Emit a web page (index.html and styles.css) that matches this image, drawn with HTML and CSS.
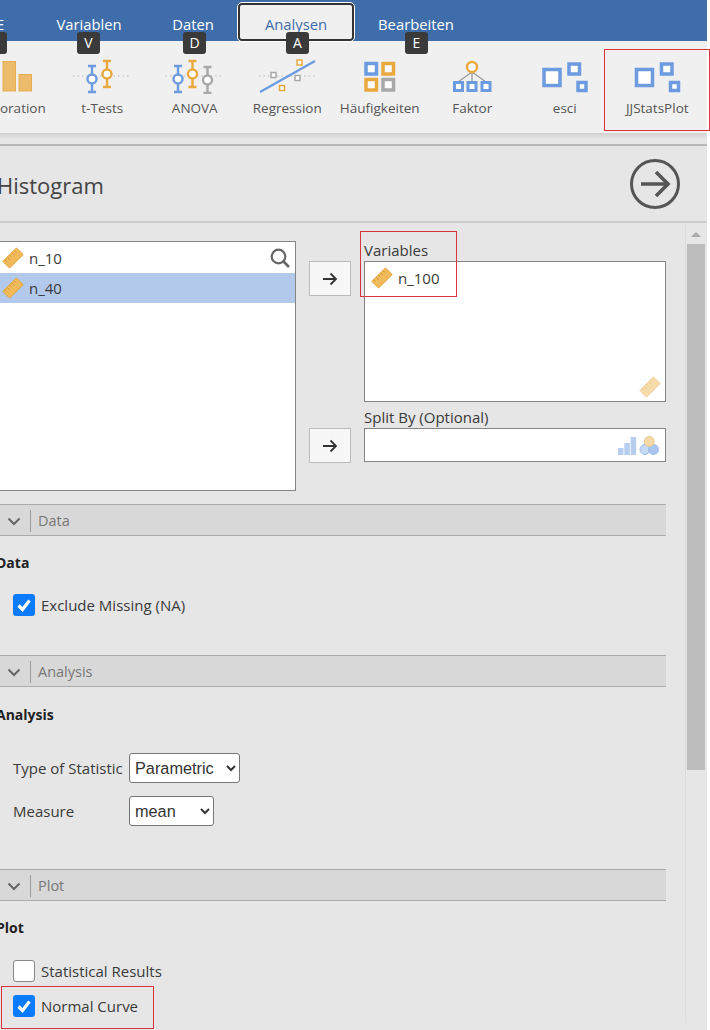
FILE: index.html
```html
<!DOCTYPE html>
<html lang="en">
<head>
  <meta charset="UTF-8">
  <title>Histogram</title>
  <link rel="stylesheet" href="styles.css">
</head>
<body>
  <svg class="defs" width="0" height="0">
    <symbol id="ruler" viewBox="0 0 24 24">
      <g transform="rotate(-45 12 12)">
        <rect x="1.500" y="6.800" width="21" height="10.400" rx="0.500" fill="#f0b95a" stroke="#e2a33c"/>
        <path d="M4.500 7.300v2.500M8 7.300v3.500M11.500 7.300v2.500M15 7.300v3.500M18.500 7.300v2.500" stroke="#c98d2c" fill="none" stroke-width="0.800"/>
      </g>
    </symbol>
    <symbol id="arrow" viewBox="0 0 16 14">
      <path d="M1 7h13M8.500 1.500L14 7l-5.500 5.500" fill="none" stroke="#333" stroke-width="1.800"/>
    </symbol>
    <symbol id="chevron" viewBox="0 0 14 9">
      <path d="M1.500 1.500L7 7l5.500-5.500" fill="none" stroke="#666" stroke-width="2"/>
    </symbol>
    <symbol id="check" viewBox="0 0 22 22">
      <rect width="22" height="22" rx="3" fill="#0d7bfd"/>
      <path d="M5.500 11.500l4 4 7-9" fill="none" stroke="#fff" stroke-width="3.200"/>
    </symbol>
  </svg>

  <div class="app">
    <nav class="tabs">
      <a class="tab tab-file">E<span class="keytip"></span></a>
      <a class="tab tab-vars">Variablen<span class="keytip">V</span></a>
      <a class="tab tab-data">Daten<span class="keytip">D</span></a>
      <a class="tab tab-active">Analysen<span class="keytip">A</span></a>
      <a class="tab tab-edit">Bearbeiten<span class="keytip">E</span></a>
    </nav>

    <div class="ribbon">
      <div class="ribbon-item">
        <svg class="ribbon-icon" viewBox="-36.500 58 92.500 36">
          <rect x="2.500" y="61.500" width="12.500" height="29.500" class="bar"/>
          <rect x="18.500" y="74.500" width="12.500" height="16.500" class="bar"/>
        </svg>
        <span>Exploration</span>
      </div>
      <div class="ribbon-item">
        <svg class="ribbon-icon" viewBox="56 58 92.500 36">
          <path d="M73 76h57" class="dots"/>
          <path d="M92 66v26M88 66h8M88 92h8" class="st-blue"/>
          <circle cx="92" cy="79" r="4.500" class="st-blue"/>
          <path d="M107 61v26M103 61h8M103 87h8" class="st-orange"/>
          <circle cx="107" cy="74" r="4.500" class="st-orange"/>
        </svg>
        <span>t-Tests</span>
      </div>
      <div class="ribbon-item">
        <svg class="ribbon-icon" viewBox="148.500 58 92.500 36">
          <path d="M165 76h57" class="dots"/>
          <path d="M177.500 66v26M173.500 66h8M173.500 92h8" class="st-blue"/>
          <circle cx="177.500" cy="79" r="4.500" class="st-blue"/>
          <path d="M192 61v26M188 61h8M188 87h8" class="st-orange"/>
          <circle cx="192" cy="74" r="4.500" class="st-orange"/>
          <path d="M207 67v26M203 67h8M203 93h8" class="st-gray"/>
          <circle cx="207" cy="80" r="4.500" class="st-gray"/>
        </svg>
        <span>ANOVA</span>
      </div>
      <div class="ribbon-item">
        <svg class="ribbon-icon" viewBox="241 58 92.500 36">
          <path d="M259 76h58" class="dots"/>
          <path d="M260 92l55-31" class="st-blue"/>
          <rect x="271" y="72.500" width="5" height="5" class="st-gray thin"/>
          <rect x="297" y="60" width="5" height="5" class="st-orange thin"/>
          <rect x="295" y="75.500" width="5" height="5" class="st-gray thin"/>
          <rect x="279.500" y="85.500" width="5" height="5" class="st-orange thin"/>
        </svg>
        <span>Regression</span>
      </div>
      <div class="ribbon-item">
        <svg class="ribbon-icon" viewBox="333.500 58 92.500 36">
          <rect x="365.500" y="63.500" width="10.500" height="10.500" class="st-blue thick"/>
          <rect x="382.500" y="63.500" width="10.500" height="10.500" class="st-orange thick"/>
          <rect x="365.500" y="79.500" width="10.500" height="10.500" class="st-orange thick"/>
          <rect x="382.500" y="79.500" width="10.500" height="10.500" class="st-gray thick"/>
        </svg>
        <span>Häufigkeiten</span>
      </div>
      <div class="ribbon-item">
        <svg class="ribbon-icon" viewBox="426 58 92.500 36">
          <path d="M472 72L458 82M472 72v10M472 72l14 10" class="link"/>
          <circle cx="472" cy="67" r="5" class="st-orange"/>
          <rect x="454.500" y="82.500" width="8" height="8" class="st-blue mid"/>
          <rect x="468" y="82.500" width="8" height="8" class="st-blue mid"/>
          <rect x="482" y="82.500" width="8" height="8" class="st-blue mid"/>
        </svg>
        <span>Faktor</span>
      </div>
      <div class="ribbon-item">
        <svg class="ribbon-icon" viewBox="518.500 58 92.500 36">
          <rect x="543.500" y="69.500" width="16" height="16" class="st-blue thick"/>
          <rect x="568.500" y="64" width="10.500" height="10" class="st-blue thick"/>
          <rect x="577.500" y="82.500" width="8" height="8" class="st-blue thick"/>
        </svg>
        <span>esci</span>
      </div>
      <div class="ribbon-item">
        <svg class="ribbon-icon" viewBox="611 58 92.500 36">
          <rect x="636.500" y="69.500" width="16" height="16" class="st-blue thick"/>
          <rect x="661.500" y="64" width="10.500" height="10" class="st-blue thick"/>
          <rect x="670.500" y="82.500" width="8" height="8" class="st-blue thick"/>
        </svg>
        <span>JJStatsPlot</span>
      </div>
    </div>

    <header class="title-row">
      <h1>Histogram</h1>
      <svg class="run-icon" viewBox="0 0 52 52">
        <circle cx="26" cy="26" r="23.500" fill="none" stroke="#555" stroke-width="3"/>
        <path d="M12 26h27M27 14l12 12-12 12" fill="none" stroke="#555" stroke-width="3.600"/>
      </svg>
    </header>

    <div class="panel">
      <main class="options">
        <div class="vars">
          <div class="source-list">
            <div class="var-row">
              <svg class="ruler"><use href="#ruler"/></svg>n_10
              <svg class="search" viewBox="0 0 20 20">
                <circle cx="8.500" cy="8.500" r="6.800" fill="none" stroke="#666" stroke-width="2.200"/>
                <path d="M13.500 13.500L19 19" stroke="#666" stroke-width="2.600"/>
              </svg>
            </div>
            <div class="var-row selected">
              <svg class="ruler"><use href="#ruler"/></svg>n_40
            </div>
          </div>

          <div class="targets">
            <div class="target target-vars">
              <button class="move"><svg><use href="#arrow"/></svg></button>
              <div class="field">
                <label>Variables</label>
                <div class="drop drop-vars">
                  <div class="var-row">
                    <svg class="ruler"><use href="#ruler"/></svg>n_100
                  </div>
                  <svg class="ruler hint"><use href="#ruler"/></svg>
                </div>
              </div>
            </div>
            <div class="target">
              <button class="move"><svg><use href="#arrow"/></svg></button>
              <div class="field">
                <label>Split By (Optional)</label>
                <div class="drop drop-split">
                  <svg class="hint-split" viewBox="0 0 42 19">
                    <path d="M0 12h5.500v7H0zM6.300 7h5.500v12H6.300zM12.600 1h5.500v18h-5.500z" fill="#b6cdf0"/>
                    <circle cx="27" cy="13.500" r="5" fill="#c5d8f4" stroke="#9dbbe8"/>
                    <circle cx="35.500" cy="13.500" r="5" fill="#a9c5ee" stroke="#9dbbe8"/>
                    <circle cx="31.200" cy="5.500" r="5" fill="#f5d9a6" stroke="#e9c98f"/>
                  </svg>
                </div>
              </div>
            </div>
          </div>
        </div>

        <section class="group group-data">
          <div class="group-head"><svg class="chevron"><use href="#chevron"/></svg><span>Data</span></div>
          <h2>Data</h2>
          <div class="check-row check-first"><svg class="box"><use href="#check"/></svg>Exclude Missing (NA)</div>
        </section>

        <section class="group group-analysis">
          <div class="group-head"><svg class="chevron"><use href="#chevron"/></svg><span>Analysis</span></div>
          <h2>Analysis</h2>
          <div class="select-grid">
            <label>Type of Statistic</label>
            <select class="sel-type"><option>Parametric</option></select>
            <label>Measure</label>
            <select class="sel-measure"><option>mean</option></select>
          </div>
        </section>

        <section class="group group-plot">
          <div class="group-head"><svg class="chevron"><use href="#chevron"/></svg><span>Plot</span></div>
          <h2>Plot</h2>
          <div class="check-row check-first"><span class="box box-off"></span>Statistical Results</div>
          <div class="check-row"><svg class="box"><use href="#check"/></svg>Normal Curve</div>
        </section>
      </main>

      <div class="scrollbar">
        <span class="scroll-up"></span>
        <span class="scroll-thumb"></span>
      </div>
    </div>
  </div>

  <div class="mark mark-plot"></div>
  <div class="mark mark-vars"></div>
  <div class="mark mark-curve"></div>
</body>
</html>
```

FILE: styles.css
```css
html, body {
  margin: 0;
  padding: 0;
  background: #fff;
}

body {
  width: 710px;
  height: 1030px;
  overflow: hidden;
  position: relative;
  font-family: "Open Sans", "Noto Sans", sans-serif;
  font-size: 15px;
  color: #3a3a3a;
}

.defs {
  position: absolute;
}

.app {
  width: 707px;
  height: 1030px;
  background: #e6e6e6;
  overflow: hidden;
}

/* top tabs */
.tabs {
  height: 41px;
  background: #3e6da9;
  display: flex;
  position: relative;
  z-index: 3;
}

.tab {
  position: relative;
  box-sizing: border-box;
  height: 38px;
  margin-top: 3px;
  line-height: 43px;
  font-size: 14.800px;
  color: #fff;
  text-align: center;
  white-space: nowrap;
}

.tab-file { width: 6px; margin-left: -1px; text-align: left; text-indent: -3px; }
.tab-vars { width: 66px; margin-left: 51px; }
.tab-data { width: 42px; margin-left: 50px; }
.tab-active {
  width: 116px;
  margin-left: 24px;
  background: #f0f0f0;
  color: #3e6da9;
  border: 2px solid #333;
  outline: 1px solid #fff;
  border-radius: 4px;
  line-height: 38px;
}
.tab-edit { width: 76px; margin-left: 24px; }

.keytip {
  position: absolute;
  top: 29px;
  left: 50%;
  width: 23px;
  height: 22px;
  margin-left: -11px;
  background: #3a3a3a;
  border-radius: 3px;
  color: #fff;
  font-size: 14px;
  line-height: 22px;
  text-align: center;
  text-indent: 0;
}

.tab-file .keytip { left: -15px; margin-left: 0; }
.tab-vars .keytip { margin-left: -12px; }
.tab-data .keytip { margin-left: -10px; }
.tab-active .keytip { top: 27px; margin-left: -10px; }
.tab-edit .keytip { margin-left: -11px; }

/* ribbon */
.ribbon {
  height: 92px;
  margin-left: -36.5px;
  background: #f0f0f0;
  display: flex;
  box-shadow: 0 2px 5px rgba(0, 0, 0, 0.12);
  position: relative;
  z-index: 2;
}

.ribbon-item {
  flex: 0 0 92.5px;
  display: flex;
  flex-direction: column;
  align-items: center;
  padding-top: 17px;
  font-size: 13.500px;
  color: #555;
  white-space: nowrap;
}

.ribbon-item span {
  margin-top: 5px;
  line-height: 18px;
}

.ribbon-icon {
  width: 92.5px;
  height: 36px;
  flex: none;
}

.bar { fill: #edbb6c; stroke: #e6ad52; }
.dots { fill: none; stroke: #bbb; stroke-dasharray: 1.500 3; }
.link { fill: none; stroke: #999; stroke-width: 1.300; }
.st-blue { fill: #fff; stroke: #6c9be0; stroke-width: 2.400; }
.st-orange { fill: #fff; stroke: #e9a93f; stroke-width: 2.400; }
.st-gray { fill: #fff; stroke: #a8a8a8; stroke-width: 2.400; }
.thin { stroke-width: 1.500; }
.mid { stroke-width: 3; }
.thick { stroke-width: 3.500; }
path.st-blue, path.st-orange, path.st-gray { fill: none; }

/* title */
.title-row {
  height: 75px;
  margin-top: 11px;
  border-top: 2px solid #b8b8b8;
  border-bottom: 2px solid #cdcdcd;
  display: flex;
  justify-content: space-between;
  align-items: center;
  padding-right: 26px;
}

h1 {
  margin: 3px 0 0 -3px;
  font-size: 22px;
  font-weight: 400;
  color: #444;
}

.run-icon {
  width: 52px;
  height: 52px;
  margin-top: 1px;
}

/* panel */
.panel {
  display: flex;
}

.options {
  width: 676px;
  margin-left: -10px;
  flex: none;
}

.scrollbar {
  width: 22px;
  margin-left: 19px;
  height: 800px;
  border-left: 1px solid #ddd;
  position: relative;
  box-sizing: border-box;
  padding: 9px 2px 0 1px;
}

.scroll-up {
  display: block;
  width: 0;
  margin: 0 auto 7px;
  border: 4px solid transparent;
  border-top: 0;
  border-bottom: 5px solid #aaa;
  border-left-width: 5px;
  border-right-width: 5px;
}

.scroll-thumb {
  display: block;
  height: 526px;
  background: #bdbdbd;
}

/* variables */
.vars {
  display: flex;
  padding-top: 18px;
}

.source-list {
  box-sizing: border-box;
  width: 306px;
  height: 250px;
  padding: 1px 0 0;
  background: #fff;
  border: 1px solid #858585;
  flex: none;
}

.var-row {
  height: 30px;
  display: flex;
  align-items: center;
  padding-left: 11px;
  position: relative;
}

.var-row.selected {
  background: #b3c9ec;
}

.ruler {
  width: 22px;
  height: 22px;
  margin-right: 5px;
  flex: none;
}

.search {
  position: absolute;
  right: 5px;
  top: 5px;
  width: 20px;
  height: 20px;
}

.targets {
  margin-left: 13px;
}

.target {
  display: flex;
}

.target-vars {
  margin-bottom: 6px;
}

.move {
  width: 42px;
  height: 35px;
  margin: 20px 13px 0 0;
  padding: 0;
  background: #f7f7f7;
  border: 1px solid #bbb;
  display: flex;
  align-items: center;
  justify-content: center;
}

.move svg {
  width: 16px;
  height: 14px;
}

.field label {
  display: block;
  height: 20px;
  line-height: 18px;
}

.drop {
  box-sizing: border-box;
  width: 302px;
  background: #fff;
  border: 1px solid #858585;
  position: relative;
}

.drop-vars {
  height: 141px;
  padding-top: 1px;
}

.drop-vars .var-row {
  padding-left: 6px;
}

.drop-split {
  height: 34px;
}

.hint {
  position: absolute;
  right: 4px;
  bottom: 3px;
  margin: 0;
  opacity: 0.5;
}

.hint-split {
  position: absolute;
  right: 5px;
  bottom: 6px;
  width: 42px;
  height: 19px;
}

/* sections */
.group-data { margin-top: 13px; }
.group-analysis { margin-top: 39px; }
.group-plot { margin-top: 43px; }

.group-head {
  box-sizing: border-box;
  height: 32px;
  padding: 2px 0 0 17px;
  background: #d8d8d8;
  border-top: 1px solid #aaa;
  border-bottom: 1px solid #aaa;
  display: flex;
  align-items: center;
  color: #777;
  font-size: 14.500px;
}

.group-head span {
  margin-left: 9px;
  padding-left: 7px;
  border-left: 1px solid #999;
  line-height: 22px;
}

.chevron {
  width: 14px;
  height: 9px;
}

h2 {
  margin: 17px 0 0 6px;
  font-size: 14px;
  line-height: 20px;
  font-weight: 700;
  color: #222;
}

.group-analysis h2 {
  margin-top: 18px;
}

.check-row {
  display: flex;
  align-items: center;
  height: 22px;
  margin: 13px 0 0 23px;
}

.check-first {
  margin-top: 22px;
}

.group-data .check-first {
  margin-top: 21px;
}

.box {
  box-sizing: border-box;
  width: 22px;
  height: 22px;
  margin-right: 6px;
  flex: none;
}

.box-off {
  background: #fff;
  border: 1px solid #888;
  border-radius: 3px;
}

.select-grid {
  display: grid;
  grid-template-columns: 116px auto;
  justify-content: start;
  align-items: center;
  row-gap: 13px;
  margin: 28px 0 0 23px;
}

select {
  height: 30px;
  font-family: "Liberation Sans", sans-serif;
  font-size: 16.300px;
  color: #333;
  background: #fff;
  border: 1px solid #767676;
  border-radius: 3px;
  padding: 0 0 0 1px;
}

.sel-type { width: 111px; }
.sel-measure { width: 85px; }

/* red annotation boxes */
.mark {
  position: absolute;
  z-index: 5;
  box-sizing: border-box;
  border: 1px solid #d8363c;
}

.mark-plot { left: 604px; top: 49px; width: 106px; height: 82px; }
.mark-vars { left: 360px; top: 231px; width: 97px; height: 66px; }
.mark-curve { left: 1px; top: 986px; width: 153px; height: 43px; }
```
